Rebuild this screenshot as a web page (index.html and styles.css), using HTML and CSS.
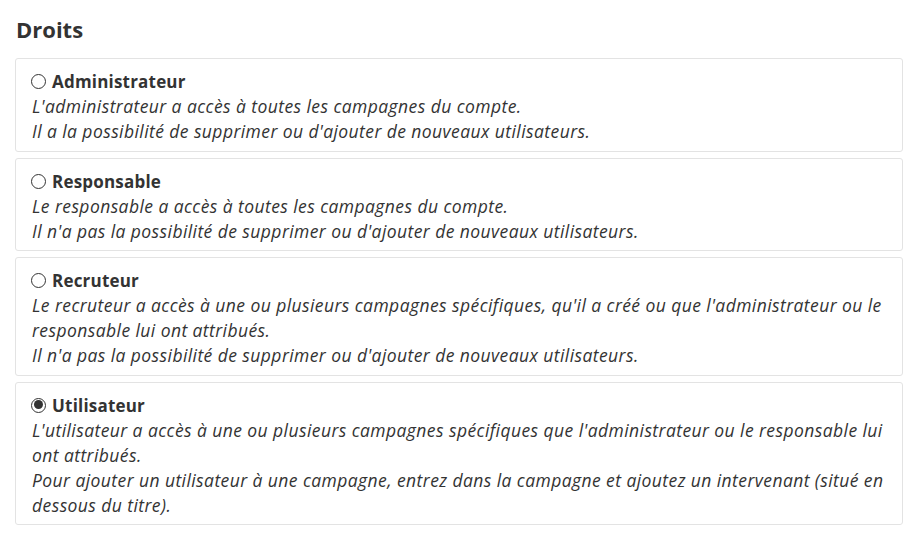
FILE: index.html
```html
<!DOCTYPE html>
<html lang="fr">
<head>
    <meta charset="UTF-8">
    <meta name="viewport" content="width=device-width, initial-scale=1.0">
    <title>Droits</title>
    <link rel="stylesheet" href="styles.css">
</head>
<body>
    <div class="container">
        <h2>Droits</h2>
        <div class="rights">
            <label class="right-option">
                <span class="right-title"><input type="radio" name="role" value="admin"> Administrateur</span>
                <span class="right-desc">L'administrateur a accès à toutes les campagnes du compte.<br>Il a la possibilité de supprimer ou d'ajouter de nouveaux utilisateurs.</span>
            </label>
            <label class="right-option">
                <span class="right-title"><input type="radio" name="role" value="manager"> Responsable</span>
                <span class="right-desc">Le responsable a accès à toutes les campagnes du compte.<br>Il n'a pas la possibilité de supprimer ou d'ajouter de nouveaux utilisateurs.</span>
            </label>
            <label class="right-option">
                <span class="right-title"><input type="radio" name="role" value="recruiter"> Recruteur</span>
                <span class="right-desc">Le recruteur a accès à une ou plusieurs campagnes spécifiques, qu'il a créé ou que l'administrateur ou le responsable lui ont attribués.<br>Il n'a pas la possibilité de supprimer ou d'ajouter de nouveaux utilisateurs.</span>
            </label>
            <label class="right-option">
                <span class="right-title"><input type="radio" name="role" value="user" checked> Utilisateur</span>
                <span class="right-desc">L'utilisateur a accès à une ou plusieurs campagnes spécifiques que l'administrateur ou le responsable lui ont attribués.<br>Pour ajouter un utilisateur à une campagne, entrez dans la campagne et ajoutez un intervenant (situé en dessous du titre).</span>
            </label>
        </div>
    </div>
</body>
</html>
```

FILE: styles.css
```css
body {
    font-family: "Open Sans", Arial, sans-serif;
    color: #333;
    margin: 0;
    background: #fff;
}
.container {
    margin: 0 10px 0 15px;
    padding-top: 14px;
}
h2 {
    font-size: 22px;
    font-weight: 700;
    margin: 0 0 14px 1px;
    line-height: 30px;
}
.rights {
    display: flex;
    flex-direction: column;
    gap: 6px;
}
.right-option {
    display: block;
    border: 1px solid #e3e3e3;
    border-radius: 3px;
    padding: 10px 16px 6.6px 15px;
    font-size: 17px;
    line-height: 25px;
    cursor: pointer;
}
.right-title {
    display: flex;
    align-items: center;
    font-weight: 700;
    gap: 6px;
    letter-spacing: 0.2px;
}
.right-desc {
    display: block;
    font-size: 17.5px;
    font-style: italic;
    letter-spacing: 0.42px;
    padding-left: 1px;
}
.right-option input[type="radio"] {
    appearance: none;
    -webkit-appearance: none;
    width: 15px;
    height: 15px;
    margin: 0;
    border: 1px solid #333;
    border-radius: 50%;
    box-sizing: border-box;
    position: relative;
}
.right-option input[type="radio"]:checked {
    border-width: 1.5px;
}
.right-option input[type="radio"]:checked::after {
    content: "";
    position: absolute;
    left: 1.5px;
    top: 1.5px;
    width: 9px;
    height: 9px;
    border-radius: 50%;
    background: #333;
}
```
